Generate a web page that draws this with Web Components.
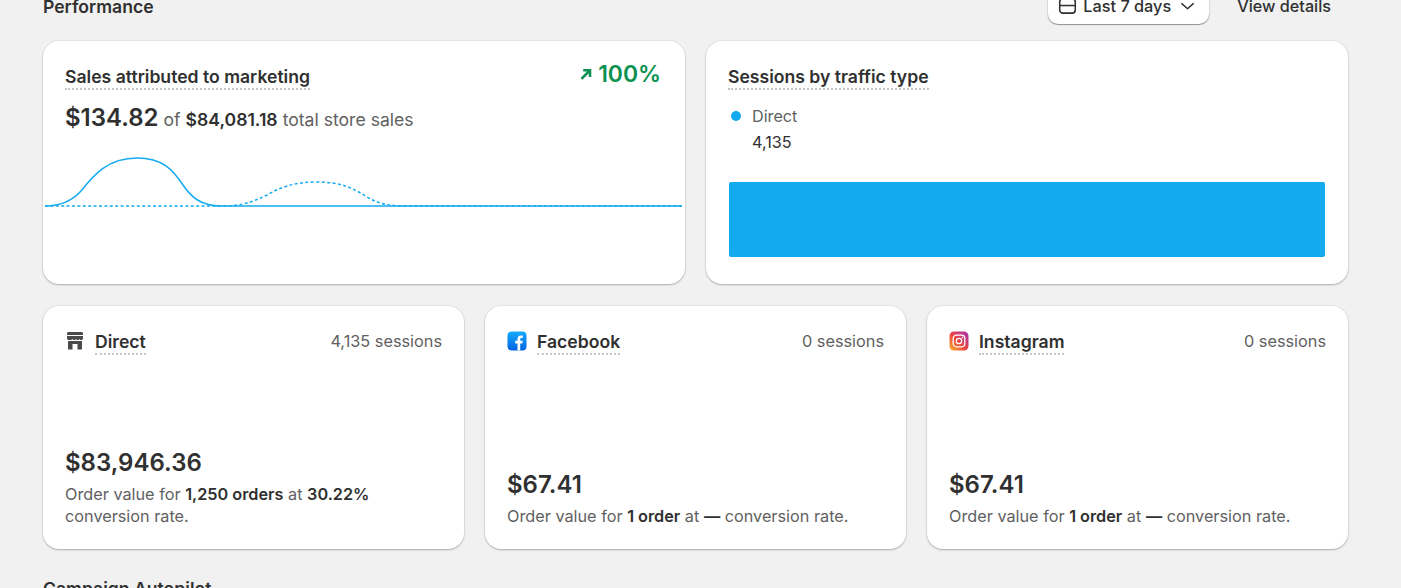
<!doctype html>
<html lang="en"><head><meta charset="utf-8"><title>Performance</title>
<style>
html,body{margin:0;height:588px;overflow:hidden;background:#f1f1f1;font-family:Inter,"Liberation Sans",sans-serif;color:#303030}
</style></head><body>
<perf-page></perf-page>
<template id="card-t"><style>
:host{display:flex;flex-direction:column;box-sizing:border-box;background:#fff;border-radius:16px;box-shadow:0 1px 2px rgba(0,0,0,.26),0 0 0 1px rgba(0,0,0,.04);min-width:0;padding:24px 22px 22px}
</style><slot></slot></template>
<template id="dt-t"><style>
:host{display:inline-block;font-size:17.6px;font-weight:580;line-height:24px;color:#303030;border-bottom:2px dotted #c4c4c4;height:23px;white-space:nowrap}
</style><slot></slot></template>
<template id="ch-t"><style>
:host{display:flex;flex-direction:column;flex:1;min-height:0}
.head{display:flex;align-items:flex-start;justify-content:space-between}
.l{display:flex;align-items:center;gap:10px}
.ic{width:20px;height:20px;display:flex;margin-top:-4px}
.s{font-size:16.3px;line-height:24px;color:#616161;margin-top:-1px}
.b{margin-top:auto}
.v{font-size:24px;font-weight:600;line-height:32px;color:#303030;margin-bottom:4px}
.t{font-size:16.25px;line-height:22px;color:#616161}
::slotted(b){font-weight:600;color:#303030}
</style><div class="head"><div class="l"><span class="ic"><slot name="icon"></slot></span><dotted-title><slot name="title"></slot></dotted-title></div><span class="s"><slot name="sessions"></slot></span></div>
<div class="b"><div class="v"><slot name="value"></slot></div><div class="t"><slot></slot></div></div></template>
<template id="page-t"><style>
:host{display:block;padding:0 53px 0 43px;margin-top:-5px}
.top{display:flex;align-items:center;justify-content:space-between;height:24px;margin-bottom:22px}
h2{margin:0;font-size:17.6px;font-weight:580;line-height:24px;color:#303030}
.acts{display:flex;align-items:center}
.btn{display:flex;align-items:center;gap:6px;box-sizing:border-box;height:36px;margin-top:-2px;padding:0 13px 0 10px;width:161px;background:#fff;border-radius:10px;box-shadow:0 1px 1px rgba(0,0,0,.35),0 0 0 1px rgba(0,0,0,.07);font-size:16.3px;font-weight:500;color:#303030}
.btn span{white-space:nowrap}
.link{font-size:16.2px;font-weight:500;margin:-2px 17px 0 28px;line-height:24px}
.r2{display:grid;grid-template-columns:1fr 1fr;gap:21px}
.r3{display:grid;grid-template-columns:repeat(3,1fr);gap:21px;margin-top:22px}
.h1{height:243px}.h3{height:243px}
.mh{display:flex;justify-content:space-between;align-items:flex-start}
.pct{display:flex;align-items:center;gap:6px;color:#0c9152;font-size:22.9px;font-weight:600;line-height:24px;margin-top:-3px;margin-right:2px}
.tot{margin-top:12px;display:flex;align-items:baseline;gap:5px;font-size:17.6px;color:#616161;line-height:32px;white-space:nowrap}
.tot b{font-weight:600;color:#303030}.tot .big{font-size:24px}
.chart{display:block;margin:14px -20px 0 -20px;width:calc(100% + 40px);height:70px;flex:none}
.lg{display:flex;align-items:center;gap:11px;font-size:16.2px;color:#616161;line-height:24px;margin:14px 0 0 3px}
.dot{width:10px;height:10px;border-radius:50%;background:#13aaf0}
.n{font-size:16.2px;color:#303030;line-height:24px;margin:2px 0 0 24px;font-weight:400}
.bar{margin:28px 1px 0 1px;height:75px;background:#13aaf0;border-radius:2px}
.foot{margin-top:28px;height:30px;overflow:hidden}
</style>
<div class="top"><h2>Performance</h2><div class="acts"><div class="btn"><svg width="20" height="20" viewBox="0 0 20 20" fill="none" stroke="#303030" stroke-width="1.6"><rect x="1.800" y="2.500" width="16.400" height="15" rx="3.400"/><path d="M1.800 9.500h16.400"/></svg><span>Last 7 days</span><svg style="margin-left:2px" width="18" height="18" viewBox="0 0 18 18" fill="none" stroke="#303030" stroke-width="1.5" stroke-linecap="round" stroke-linejoin="round"><path d="M3 6.500 9 12l6-5.500"/></svg></div><span class="link">View details</span></div></div>
<div class="r2">
<perf-card class="h1"><div class="mh"><dotted-title>Sales attributed to marketing</dotted-title><span class="pct"><svg width="12" height="12" viewBox="0 0 12 12" fill="none" stroke="#0c9152" stroke-width="2.600"><path d="M1.500 10.800 9.200 3M3.200 2.300H10V9"/></svg>100%</span></div>
<div class="tot"><b class="big">$134.82</b><span>of</span><b>$84,081.18</b><span>total store sales</span></div>
<svg class="chart" viewBox="0 0 638 70" preserveAspectRatio="none" fill="none" stroke="#13aaf0"><path stroke-width="1.500" d="M0 56C16 56 27 51 36 41 48 26 62 8 92 8 118 8 128 20 138 35 146 47 156 56 176 56H637"/><path stroke-width="1.500" stroke-dasharray="3 2.400" d="M0 56H178C196 56 208 52 222 45 236 37 250 32 272 32 296 32 308 38 322 47 334 54 344 56 362 56H637"/></svg></perf-card>
<perf-card class="h1"><div><dotted-title>Sessions by traffic type</dotted-title></div>
<div class="lg"><i class="dot"></i><span>Direct</span></div><div class="n">4,135</div><div class="bar"></div></perf-card>
</div>
<div class="r3">
<perf-card class="h3"><channel-body><svg slot="icon" width="20" height="20" viewBox="0 0 20 20" fill="#4a4a4a"><path d="M2 2.500C2 1.700 2.700 1 3.500 1h13c.8 0 1.500.7 1.500 1.500V4H2z"/><path d="M2 5h16v2.200c0 1-.8 1.800-1.800 1.800-.8 0-1.500-.5-1.800-1.100-.3.600-1 1.100-1.800 1.100s-1.400-.5-1.700-1.100c-.3.600-1 1.100-1.700 1.100s-1.400-.5-1.700-1.100C7 8.500 6.400 9 5.500 9H3.800C2.800 9 2 8.200 2 7.200z"/><path d="M3 10h14v8.500h-4.500V13h-5v5.500H3z"/></svg><span slot="title">Direct</span><span slot="sessions">4,135 sessions</span><span slot="value">$83,946.36</span>Order value for <b>1,250 orders</b> at <b>30.22%</b> conversion rate.</channel-body></perf-card>
<perf-card class="h3"><channel-body><svg slot="icon" width="20" height="20" viewBox="0 0 20 20"><defs><linearGradient id="fb" x1="0" y1="0" x2="0" y2="1"><stop offset="0" stop-color="#18acfe"/><stop offset="1" stop-color="#0163e0"/></linearGradient></defs><rect x=".5" y=".5" width="19" height="19" rx="4" fill="url(#fb)"/><path fill="#fff" d="M13.200 19.500v-7h2.100l.4-2.700h-2.500V8.400c0-.8.300-1.300 1.400-1.300h1.200V4.800c-.5-.1-1.200-.2-2-.2-2.100 0-3.300 1.200-3.300 3.400v1.800H8.200v2.700h2.300v7z"/></svg><span slot="title">Facebook</span><span slot="sessions">0 sessions</span><span slot="value">$67.41</span>Order value for <b>1 order</b> at <b>—</b> conversion rate.</channel-body></perf-card>
<perf-card class="h3"><channel-body><svg slot="icon" width="20" height="20" viewBox="0 0 20 20"><defs><linearGradient id="ig" x1="0" y1="1" x2="1" y2="0"><stop offset="0" stop-color="#fdb32b"/><stop offset=".45" stop-color="#f0453d"/><stop offset="1" stop-color="#a32fb4"/></linearGradient></defs><rect x=".5" y=".5" width="19" height="19" rx="4.500" fill="url(#ig)"/><rect x="4.200" y="4.200" width="11.600" height="11.600" rx="3.200" fill="none" stroke="#fff" stroke-width="1.300"/><circle cx="10" cy="10" r="2.700" fill="none" stroke="#fff" stroke-width="1.300"/><circle cx="13.500" cy="6.500" r=".8" fill="#fff"/></svg><span slot="title">Instagram</span><span slot="sessions">0 sessions</span><span slot="value">$67.41</span>Order value for <b>1 order</b> at <b>—</b> conversion rate.</channel-body></perf-card>
</div>
<div class="foot"><h2>Campaign Autopilot</h2></div>
</template>
<script>
const mk=(tag,id)=>customElements.define(tag,class extends HTMLElement{constructor(){super();this.attachShadow({mode:"open"}).append(document.getElementById(id).content.cloneNode(true))}});
mk("perf-card","card-t");mk("dotted-title","dt-t");mk("channel-body","ch-t");mk("perf-page","page-t");
</script>
</body></html>
